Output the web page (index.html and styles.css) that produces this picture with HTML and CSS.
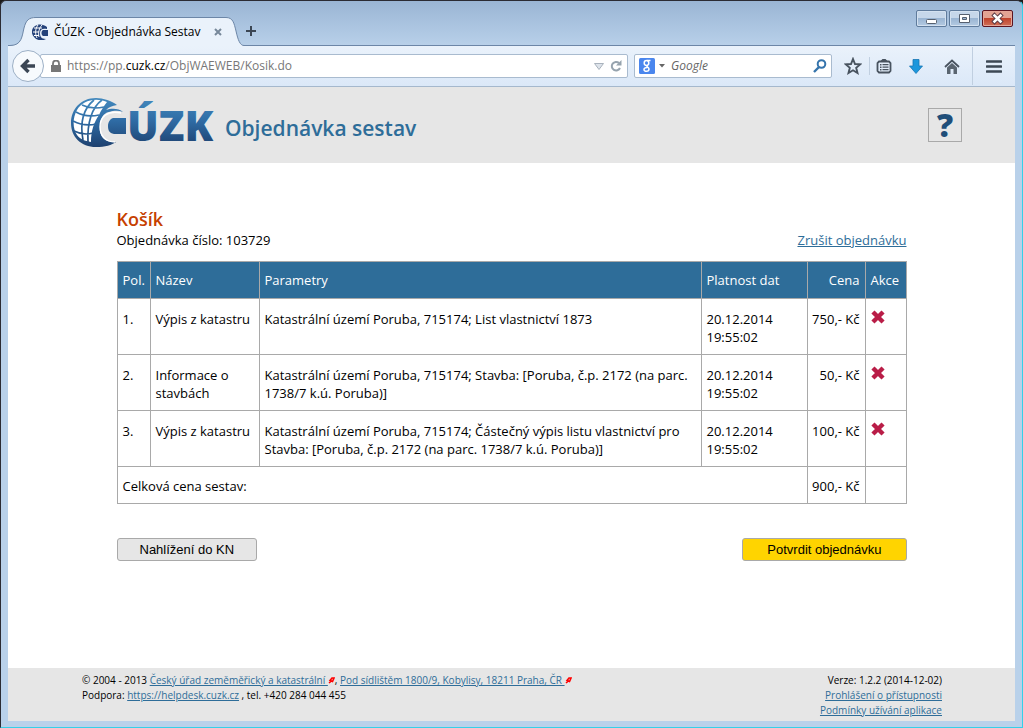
FILE: index.html
```html
<!DOCTYPE html>
<html lang="cs">
<head>
<meta charset="utf-8">
<title>ČÚZK - Objednávka Sestav</title>
<link rel="stylesheet" href="styles.css">
</head>
<body>
<svg class="defs" width="0" height="0" aria-hidden="true">
  <defs>
    <linearGradient id="brand" x1="0" y1="0" x2="0" y2="50" gradientUnits="userSpaceOnUse">
      <stop offset="0" stop-color="#4389bd"/><stop offset=".45" stop-color="#2f6ca5"/><stop offset="1" stop-color="#1d3f6d"/>
    </linearGradient>
    <symbol id="globe" viewBox="0 0 56 50">
      <path fill="url(#brand)" d="M46 7C41 3 32 0 25 0 10 0 0 11 0 25s10 24 25 24c9 0 16-2 20-5C34 45 28 39 29 29c0-8 3-14 9-15 4-1 9-2 14 0C48 10 40 10 35 12c3-3 6-4 11-5z"/>
      <path fill="#fff" d="M36 4C24-1 11 3 6 12 1 21 2 31 6 37c3 4 8 6 14 7 0-11 3-20 8-27 2-5 5-9 8-13z"/>
      <path fill="none" stroke="url(#brand)" stroke-width="1.700" d="M23 2C12 11 9 26 12 42M31 2C21 9 16 25 17 44M11 7c6 3 13 4 22 2M5 14c7 4 14 5 23 3M2 23c8 4 15 5 23 3M3 33c6 3 12 4 19 2"/>
      <path fill="none" stroke="#fff" stroke-width="1.400" d="M50 15C36 12 29 19 29 29c0 9 6 15 15 15"/>
      <path fill="url(#brand)" d="M42 20h13v16H43c-5-1-6-4-6-8s2-7 5-8z"/>
    </symbol>
    <symbol id="cross" viewBox="0 0 14 14">
      <path d="M3.500 3.500l7 7M10.500 3.500l-7 7" stroke="#b91d47" stroke-width="4.400" stroke-linecap="square" fill="none"/>
    </symbol>
    <symbol id="ext" viewBox="0 0 7 8">
      <path fill="none" stroke="#f00" stroke-width="1.600" d="M1 7l3-2.500M2 4.500L4 2h2L4.500 5.500z"/>
    </symbol>
  </defs>
</svg>
<div class="window">
  <header class="titlebar">
    <div class="tab">
      <svg class="tab-shape" viewBox="0 0 234 29" preserveAspectRatio="none" aria-hidden="true">
        <path d="M0 28.500C12 28.500 12 19 14 11 16 3 19 .5 26 .5H216C223 .5 224 6 226 14 228 23 230 28.500 234 28.500V29H0z" fill="#eaf2fb"/>
        <path d="M0 28.500C12 28.500 12 19 14 11 16 3 19 .5 26 .5H216C223 .5 224 6 226 14 228 23 230 28.500 234 28.500" fill="none" stroke="#6c86a7"/>
      </svg>
      <svg class="favicon" viewBox="0 0 16 16" aria-hidden="true">
        <path fill="#24427a" d="M15 3C12 0 6-.5 3 2c-4 3-4 8-1 11 3 4 9 4 12 2-5 0-6-3-6-6 0-4 3-5 7-4z"/>
        <path fill="none" stroke="#fff" d="M6 1C3 5 3 10 5 14M10 1C7 4 6 9 7 13M2 4h8M1 8h6M2 11.500h5"/>
        <path fill="#24427a" d="M11 6h5v6h-5c-2-1-2-5 0-6z"/>
      </svg>
      <span class="tab-title">ČÚZK - Objednávka Sestav</span>
      <button class="icon-btn tab-close" aria-label="Zavřít panel"><svg width="8" height="8" viewBox="0 0 8 8"><path d="M1 1l6 6M7 1l-6 6" stroke="#77889a" stroke-width="2"/></svg></button>
    </div>
    <button class="icon-btn new-tab" aria-label="Nový panel"><svg width="12" height="12" viewBox="0 0 12 12"><path d="M6 1v10M1 6h10" stroke="#3b4654" stroke-width="2"/></svg></button>
    <div class="window-controls">
      <button class="win-btn" aria-label="Minimalizovat"><svg width="29" height="15" viewBox="0 0 29 15"><rect x="9.500" y="8.500" width="10" height="4" rx="1" fill="#fff" stroke="#56606f"/></svg></button>
      <button class="win-btn" aria-label="Obnovit"><svg width="29" height="15" viewBox="0 0 29 15"><path d="M9.500 3.500h10v8h-10z" fill="#fff" stroke="#56606f"/><path d="M12.500 6.500h4v2h-4z" fill="#9db8d6" stroke="#56606f"/></svg></button>
      <button class="win-btn win-close" aria-label="Zavřít"><svg width="29" height="15" viewBox="0 0 29 15"><path d="M11.500 4.500l6 6M17.500 4.500l-6 6" stroke="#5a3a44" stroke-width="4.500" stroke-linecap="square"/><path d="M11.500 4.500l6 6M17.500 4.500l-6 6" stroke="#fff" stroke-width="2.600" stroke-linecap="square"/></svg></button>
    </div>
  </header>
  <nav class="toolbar">
    <button class="back" aria-label="Zpět"><svg width="16" height="16" viewBox="0 0 16 16"><path d="M8.500 2L2.500 8l6 6M3 8h12" fill="none" stroke="#3b4654" stroke-width="3.400"/></svg></button>
    <div class="address">
      <svg width="10" height="12" viewBox="0 0 10 12"><path d="M0 5h10v7H0z" fill="#777"/><path d="M2 6V3.500a3 3 0 0 1 6 0V6" fill="none" stroke="#777" stroke-width="1.800"/></svg>
      <span class="url">https://pp.<b>cuzk.cz</b>/ObjWAEWEB/Kosik.do</span>
      <svg width="10" height="7" viewBox="0 0 10 7"><path d="M.5.5h9L5 6.500z" fill="#dde3ea" stroke="#a9b2bd"/></svg>
      <button class="icon-btn" aria-label="Obnovit stránku"><svg width="12" height="12" viewBox="0 0 12 12"><path d="M9 3A4.300 4.300 0 1 0 10 8" fill="none" stroke="#96a3ae" stroke-width="2"/><path d="M11.500 0v5.500H6z" fill="#96a3ae"/></svg></button>
    </div>
    <div class="search">
      <svg width="16" height="16" viewBox="0 0 16 16"><rect width="16" height="16" rx="1.500" fill="#4a86ee"/><g fill="none" stroke="#fff" stroke-width="1.500"><ellipse cx="7.500" cy="5" rx="2.300" ry="2.400"/><path d="M8 2.500h3.500M8.500 7.500c-2 1 1.500 1.500 1.500 3.500 0 3-5 3-5 .5 0-1.500 2-2 3.500-2"/></g></svg>
      <svg width="6" height="4" viewBox="0 0 6 4"><path d="M0 0h6L3 3.500z" fill="#666"/></svg>
      <input class="search-input" type="text" placeholder="Google" aria-label="Hledat">
      <button class="icon-btn" aria-label="Vyhledat"><svg width="14" height="14" viewBox="0 0 14 14"><circle cx="8.500" cy="5" r="3.800" fill="none" stroke="#3574ac" stroke-width="2"/><path d="M6 8l-5 5" stroke="#3574ac" stroke-width="2.400"/></svg></button>
    </div>
    <div class="tools">
      <button class="icon-btn" aria-label="Záložky"><svg width="18" height="18" viewBox="0 0 18 18"><path d="M9 2l2 5 5.200.4-4 3.400 1.300 5.200L9 13.300 4.500 16l1.300-5.200-4-3.400L7 7z" fill="none" stroke="#48535f" stroke-width="1.900"/></svg></button>
      <button class="icon-btn divided" aria-label="Seznam záložek"><svg width="16" height="16" viewBox="0 0 16 16"><path d="M3 3.500h10l1.500 1.500v8L13 14.500H3L1.500 13V5z" fill="none" stroke="#48535f" stroke-width="1.800"/><path d="M4 3.500L6.500 1h3L12 3.500zM4 6h1.500v1.500H4zM4 8.500h1.500V10H4zM4 11h1.500v1.500H4z" fill="#48535f"/><path d="M6.500 6.700h6M6.500 9.200h6M6.500 11.700h6" stroke="#48535f" stroke-width="1.200"/></svg></button>
      <button class="icon-btn" aria-label="Stahování"><svg width="14" height="15" viewBox="0 0 14 15"><path d="M4 .5h6V7h3.500L7 14.500.5 7H4z" fill="#1c97dc" stroke="#1676b4" stroke-width=".8"/></svg></button>
      <button class="icon-btn" aria-label="Domů"><svg width="16" height="15" viewBox="0 0 16 15"><path d="M1 8l7-6.500L15 8" fill="none" stroke="#48535f" stroke-width="1.800"/><path d="M3 8.500l5-4.500 5 4.500V15H9.500v-5h-3v5H3z" fill="#5a6570"/></svg></button>
      <button class="icon-btn menu" aria-label="Nabídka"><svg width="16" height="13" viewBox="0 0 16 13"><path d="M1 1.500h14M1 6.500h14M1 11.500h14" stroke="#3d4854" stroke-width="2.600" stroke-linecap="round"/></svg></button>
    </div>
  </nav>
  <div class="page">
    <header class="site-header">
      <svg class="logo" width="148" height="66" viewBox="0 -8 148 66" role="img" aria-label="ČÚZK">
        <use href="#globe" width="56" height="50"/>
        <text class="logo-text" x="56" y="43">ÚZK</text>
      </svg>
      <h1 class="app-title">Objednávka sestav</h1>
      <button class="help" aria-label="Nápověda">?</button>
    </header>
    <main class="content">
      <h2 class="heading">Košík</h2>
      <div class="order-line"><span>Objednávka číslo: 103729</span><a href="#">Zrušit objednávku</a></div>
      <table class="cart">
        <colgroup><col class="c-no"><col class="c-name"><col><col class="c-date"><col class="c-price"><col class="c-act"></colgroup>
        <thead><tr><th>Pol.</th><th>Název</th><th>Parametry</th><th>Platnost dat</th><th class="price">Cena</th><th>Akce</th></tr></thead>
        <tbody>
          <tr><td>1.</td><td>Výpis z katastru</td><td>Katastrální území Poruba, 715174; List vlastnictví 1873</td><td>20.12.2014<br>19:55:02</td><td class="price">750,- Kč</td><td><button class="icon-btn remove" aria-label="Odstranit položku 1"><svg width="14" height="14"><use href="#cross"/></svg></button></td></tr>
          <tr><td>2.</td><td>Informace o stavbách</td><td>Katastrální území Poruba, 715174; Stavba: [Poruba, č.p. 2172 (na parc. 1738/7 k.ú. Poruba)]</td><td>20.12.2014<br>19:55:02</td><td class="price">50,- Kč</td><td><button class="icon-btn remove" aria-label="Odstranit položku 2"><svg width="14" height="14"><use href="#cross"/></svg></button></td></tr>
          <tr><td>3.</td><td>Výpis z katastru</td><td>Katastrální území Poruba, 715174; Částečný výpis listu vlastnictví pro Stavba: [Poruba, č.p. 2172 (na parc. 1738/7 k.ú. Poruba)]</td><td>20.12.2014<br>19:55:02</td><td class="price">100,- Kč</td><td><button class="icon-btn remove" aria-label="Odstranit položku 3"><svg width="14" height="14"><use href="#cross"/></svg></button></td></tr>
        </tbody>
        <tfoot><tr><td colspan="4">Celková cena sestav:</td><td class="price">900,- Kč</td><td></td></tr></tfoot>
      </table>
      <div class="actions"><button class="btn">Nahlížení do KN</button><button class="btn btn-primary">Potvrdit objednávku</button></div>
    </main>
    <footer class="site-footer">
      <div>
        <div>© 2004 - 2013 <a href="#">Český úřad zeměměřický a katastrální <svg width="7" height="8"><use href="#ext"/></svg></a>, <a href="#">Pod sídlištěm 1800/9, Kobylisy, 18211 Praha, ČR <svg width="7" height="8"><use href="#ext"/></svg></a></div>
        <div>Podpora: <a href="#">https://helpdesk.cuzk.cz</a> , tel. +420 284 044 455</div>
      </div>
      <div class="footer-right"><div>Verze: 1.2.2 (2014-12-02)</div><div><a href="#">Prohlášení o přístupnosti</a></div><div><a href="#">Podmínky užívání aplikace</a></div></div>
    </footer>
  </div>
</div>
</body>
</html>
```
FILE: styles.css
```css
* { box-sizing: border-box; }
body {
  margin: 0;
  background: #1a1a1a;
  color: #000;
  font: 12px/18px "Open Sans", "Noto Sans", sans-serif;
}
a { color: #2e6d99; }
button { font: inherit; cursor: pointer; }
.defs { position: absolute; }
.icon-btn { display: flex; align-items: center; justify-content: center; padding: 0; border: 0; background: none; }

.window {
  display: flex;
  flex-direction: column;
  min-height: 100vh;
  padding: 1px 7px 6px;
  border: 1px solid #35d0e8;
  border-top-color: #2b2b33;
  border-left-color: #2b2b33;
  border-radius: 6px 6px 0 0;
  background: linear-gradient(#9ab5d4, #b9d1ea 46px) #b9d1ea;
}

.titlebar { display: flex; align-items: flex-end; height: 44px; padding-left: 2px; border-bottom: 1px solid #6c86a7; }
.tab { position: relative; display: flex; align-items: center; width: 234px; height: 29px; margin-bottom: -1px; padding: 0 18px 0 22px; }
.tab-shape { position: absolute; inset: 0; width: 100%; height: 100%; }
.favicon { position: relative; width: 16px; height: 16px; }
.tab-title { position: relative; flex: 1; margin-left: 6px; white-space: nowrap; }
.tab-close { position: relative; width: 16px; height: 16px; }
.new-tab { width: 14px; height: 28px; }
.window-controls { display: flex; align-self: flex-start; gap: 2px; margin: 8px 2px 0 auto; }
.win-btn {
  width: 31px;
  height: 17px;
  padding: 0;
  border: 1px solid #5f7b9c;
  border-radius: 2px;
  background: linear-gradient(#c6d7ea 48%, #9ab5d3 50%, #b4cae2);
  box-shadow: inset 0 0 0 1px #d3e1f0;
}
.win-btn svg { display: block; }
.win-close { border-color: #5c1420; background: linear-gradient(#e3a393 48%, #c0432c 50%, #cf7059); box-shadow: inset 0 0 0 1px #e5a799; }

.toolbar { display: flex; align-items: center; height: 41px; padding: 0 0 0 4px; border-bottom: 1px solid #a5b8cd; background: linear-gradient(#eaf2fb, #dbe8f8); }
.back {
  position: relative;
  display: flex;
  align-items: center;
  justify-content: center;
  width: 32px;
  height: 32px;
  padding: 0;
  border: 1px solid #9db0c6;
  border-radius: 50%;
  background: #f7fafd;
}
.address, .search { display: flex; align-items: center; height: 24px; border: 1px solid #a9bbcf; border-radius: 2px; background: #fff; }
.address { flex: 1; gap: 6px; margin-left: -4px; padding: 0 5px 0 10px; }
.url { flex: 1; color: #777; white-space: nowrap; }
.url b { color: #000; font-weight: 400; }
.search { width: 198px; gap: 4px; margin-left: 6px; padding: 0 4px; }
.search-input { flex: 1; min-width: 0; margin-left: 2px; padding: 0; border: 0; outline: 0; font: italic 12px/18px "Open Sans", sans-serif; }
.search-input::placeholder { color: #666; opacity: 1; }
.tools { display: flex; align-items: center; gap: 2px; margin-left: 4px; }
.tools .icon-btn { width: 34px; height: 38px; }
.tools .divided { width: 28px; height: 18px; margin-left: -3px; border-left: 1px solid #c0cfe0; }
.tools .menu { width: 43px; margin-left: 1px; border-left: 1px solid #c0cfe0; }

.page { display: flex; flex: 1; flex-direction: column; background: #fff; }
.site-header { display: flex; align-items: center; height: 76px; padding: 0 53px 0 63px; background: #e6e6e6; }
.logo { margin-bottom: 4px; }
.logo-text { fill: url(#brand); font: 800 42px "Open Sans", sans-serif; }
.app-title { margin: 6px 0 0 6px; color: #2e6d99; font-size: 21px; font-weight: 600; line-height: 30px; }
.help { width: 34px; height: 34px; margin-left: auto; padding: 0; border: 1px solid #a9a9a9; background: none; color: #1f4e79; font: 800 32px/30px "Open Sans", sans-serif; }

.content { width: 100%; max-width: 790px; margin: 0 auto; padding-top: 44px; flex: 1; font-size: 13px; }
.heading { margin: 0; color: #c63f00; font-size: 18px; font-weight: 600; line-height: 24px; }
.order-line { display: flex; justify-content: space-between; margin-bottom: 12px; }
.cart { width: 100%; table-layout: fixed; border-collapse: collapse; }
.cart th, .cart td { padding: 11px 5px 8px; border: 1px solid #a9a9a9; text-align: left; vertical-align: top; }
.cart th { padding: 9px 5px; background: #2e6d99; color: #fff; font-weight: 400; }
.cart tfoot td { padding: 10px 5px 8px; }
.cart .price { padding-left: 2px; text-align: right; white-space: nowrap; }
.c-no { width: 33px; }
.c-name { width: 109px; }
.c-date { width: 106px; }
.c-price { width: 58px; }
.c-act { width: 41px; }
.actions { display: flex; justify-content: space-between; margin-top: 34px; }
.btn { height: 23px; padding: 0 22px; border: 1px solid #a9a9a9; border-radius: 3px; background: #e6e6e6; color: #000; font: 13px/21px "Liberation Sans", Arial, sans-serif; }
.btn-primary { padding: 0 24px; background: #ffd400; }

.site-footer { display: flex; justify-content: space-between; min-height: 52px; padding: 5px 73px 3px 74px; background: #e6e6e6; font-size: 10px; line-height: 15px; }
.footer-right { text-align: right; }
```
